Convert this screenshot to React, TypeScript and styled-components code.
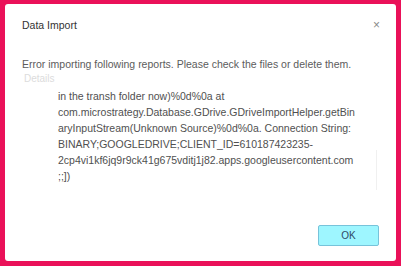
import React from "react";
import styled, { createGlobalStyle } from "styled-components";

const Global = createGlobalStyle`
  html, body { margin: 0; padding: 0; }
  body {
    width: 401px; height: 266px; overflow: hidden;
    background: #ea1159;
    font-family: "Liberation Sans", Arial, sans-serif;
  }
`;

const Frame = styled.div`
  box-sizing: border-box;
  width: 401px;
  height: 266px;
  padding: 4px 5px 5px 5px;
  display: flex;
`;

const Dialog = styled.div`
  flex: 1;
  background: #fff;
  border-radius: 3px;
  display: flex;
  flex-direction: column;
  padding: 0 17px 0 17px;
`;

const Header = styled.div`
  height: 38px;
  display: flex;
  align-items: center;
  justify-content: space-between;
  padding-top: 2px;
`;

const Title = styled.div`
  font-size: 10.5px;
  color: #333;
`;

const Close = styled.div`
  font-size: 12px;
  color: #8a8a8a;
  margin-right: -1px;
`;

const Message = styled.div`
  margin-top: 12px;
  font-size: 10.5px;
  color: #5c5c5c;
  line-height: 16px;
  white-space: nowrap;
`;

const DetailsLabel = styled.div`
  font-size: 10px;
  color: #dcdcdc;
  line-height: 14px;
  padding-left: 2px;
  margin-bottom: 2px;
`;

const DetailsBox = styled.div`
  margin-left: 36px;
  margin-right: 2px;
  height: 102px;
  display: flex;
`;

const DetailsText = styled.div`
  flex: 1;
  font-size: 10.5px;
  color: #505050;
  line-height: 16px;
  word-break: break-all;
`;

const Scrollbar = styled.div`
  width: 1px;
  margin-top: 62px;
  background: #f0f0f0;
`;

const Footer = styled.div`
  flex: 1;
  display: flex;
  justify-content: flex-end;
  align-items: flex-end;
  padding-bottom: 15px;
`;

const OkButton = styled.button`
  width: 61px;
  height: 21px;
  background: #9ef6ff;
  border: 1px solid #77c3da;
  border-radius: 2px;
  font-family: "Liberation Sans", Arial, sans-serif;
  font-size: 10px;
  color: #2f4a66;
  padding: 0;
`;

export default function App() {
  return (
    <>
      <Global />
      <Frame>
        <Dialog>
          <Header>
            <Title>Data Import</Title>
            <Close>×</Close>
          </Header>
          <Message>Error importing following reports. Please check the files or delete them.</Message>
          <DetailsLabel>Details</DetailsLabel>
          <DetailsBox>
            <DetailsText>
              in the transh folder now)%0d%0a at
              <br />
              com.microstrategy.Database.GDrive.GDriveImportHelper.getBin
              <br />
              aryInputStream(Unknown Source)%0d%0a. Connection String:
              <br />
              BINARY;GOOGLEDRIVE;CLIENT_ID=610187423235-
              <br />
              2cp4vi1kf6jq9r9ck41g675vditj1j82.apps.googleusercontent.com
              <br />
              ;;])
            </DetailsText>
            <Scrollbar />
          </DetailsBox>
          <Footer>
            <OkButton>OK</OkButton>
          </Footer>
        </Dialog>
      </Frame>
    </>
  );
}
